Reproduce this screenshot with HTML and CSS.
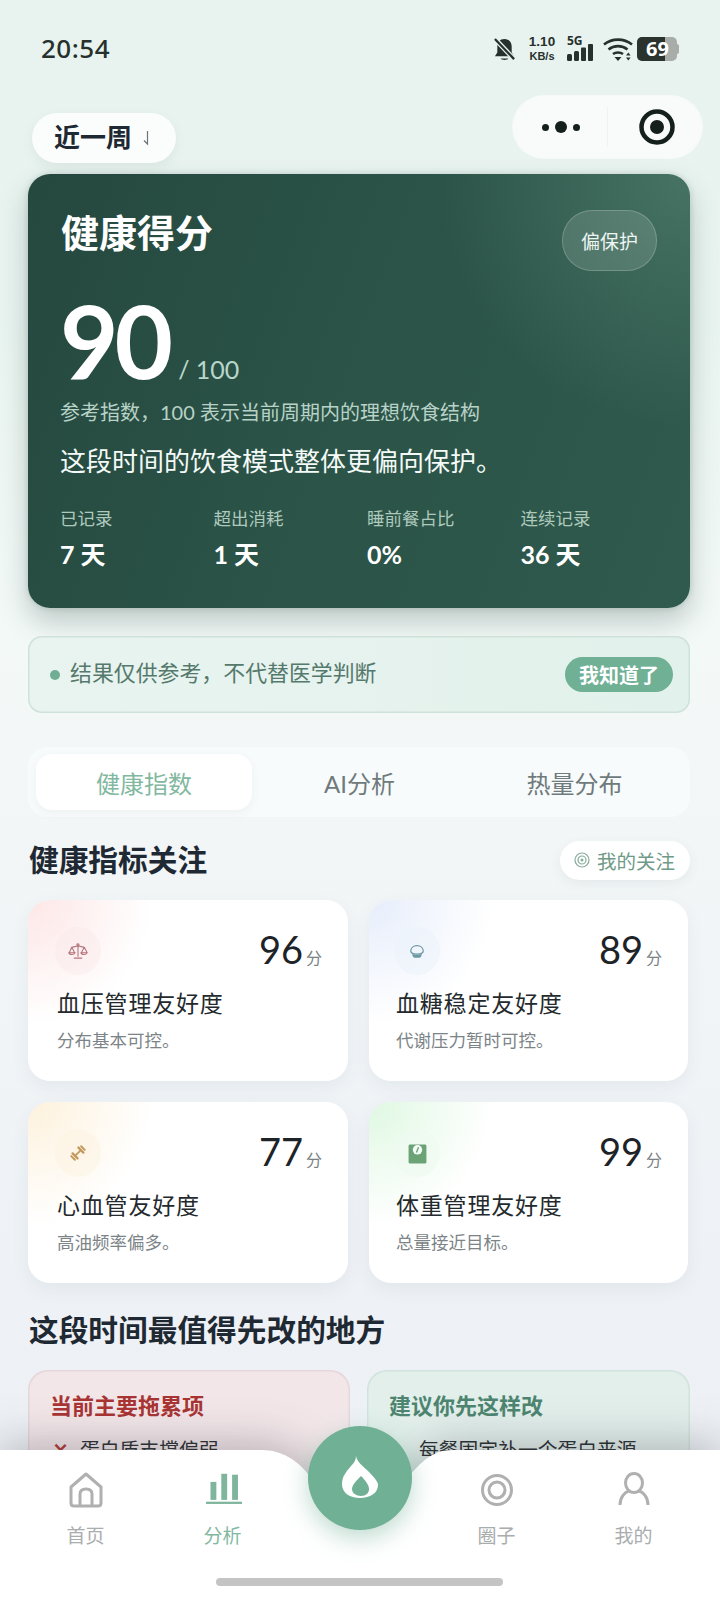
FILE: index.html
```html
<!DOCTYPE html>
<html lang="zh">
<head>
<meta charset="utf-8">
<title>健康得分</title>
<link rel="stylesheet" href="styles.css">
</head>
<body>
<div class="app">
  <header class="status">
    <span class="time">20:54</span>
    <div class="status-icons">
      <svg class="ic-bell" viewBox="0 0 24 26"><path d="M12 2c-5 0-7.500 3.500-7.500 8v6L2 20h20l-2.500-4v-6c0-4.500-2.500-8-7.500-8z" fill="#26302c"/><path d="M8 22.500c1 2 7 2 8 0z" fill="#26302c"/><path d="M2 2l20 21" stroke="#e9f3ef" stroke-width="5"/><path d="M2 2l20 21" stroke="#26302c" stroke-width="2.400"/></svg>
      <div class="speed"><span class="speed-num">1.10</span><span class="speed-unit">KB/s</span></div>
      <div class="net">
        <span class="net-label">5G</span>
        <svg class="ic-bars" viewBox="0 0 27 17"><rect x="0" y="10" width="5" height="7" rx="1.500"/><rect x="7" y="7" width="5" height="10" rx="1.500"/><rect x="14" y="3.500" width="5" height="13.500" rx="1"/><rect x="21" y="0" width="5" height="17" rx="1"/></svg>
      </div>
      <svg class="ic-wifi" viewBox="0 0 32 24"><path d="M2 7.500C10 1 22 1 30 7.500M6.500 12.500c5.500-4.500 13.500-4.500 19 0M11 17c2.800-2 7.200-2 10 0" fill="none" stroke="#26302c" stroke-width="2.600"/><path d="M12.500 20h7L16 24z" fill="#26302c"/><path d="M24 18.500h4.600l-2.300-3zM24 20.500h4.600l-2.300 3z" fill="#26302c"/></svg>
      <div class="battery"><span class="battery-fill"></span><span class="battery-num">69</span><span class="battery-nub"></span></div>
    </div>
  </header>

  <div class="topbar">
    <button class="period">近一周<svg class="ic-harpoon" viewBox="0 0 8 16"><path d="M5.500 1v13L2 10.500" fill="none" stroke="#6c7478" stroke-width="1.200"/></svg></button>
    <div class="capsule">
      <div class="capsule-dots"><i class="dot-s"></i><i class="dot-l"></i><i class="dot-s"></i></div>
      <span class="capsule-sep"></span>
      <svg class="ic-target" viewBox="0 0 38 38"><circle cx="19" cy="19" r="15.500" fill="none" stroke="#15201c" stroke-width="4.500"/><circle cx="19" cy="19" r="7" fill="#15201c"/></svg>
    </div>
  </div>

  <section class="hero">
    <div class="hero-head">
      <h1 class="hero-title">健康得分</h1>
      <span class="hero-badge">偏保护</span>
    </div>
    <div class="hero-score"><span class="hero-num">90</span><span class="hero-max">/ 100</span></div>
    <p class="hero-ref">参考指数，100 表示当前周期内的理想饮食结构</p>
    <p class="hero-desc">这段时间的饮食模式整体更偏向保护。</p>
    <div class="hero-stats">
      <div class="stat"><span class="stat-label">已记录</span><span class="stat-value">7 天</span></div>
      <div class="stat"><span class="stat-label">超出消耗</span><span class="stat-value">1 天</span></div>
      <div class="stat"><span class="stat-label">睡前餐占比</span><span class="stat-value">0%</span></div>
      <div class="stat"><span class="stat-label">连续记录</span><span class="stat-value">36 天</span></div>
    </div>
  </section>

  <div class="notice">
    <i class="notice-dot"></i>
    <span class="notice-text">结果仅供参考，不代替医学判断</span>
    <button class="notice-btn">我知道了</button>
  </div>

  <nav class="tabs">
    <span class="tab tab-active">健康指数</span>
    <span class="tab">AI分析</span>
    <span class="tab">热量分布</span>
  </nav>

  <div class="section-head">
    <h2 class="section-title">健康指标关注</h2>
    <button class="follow">
      <svg class="ic-follow" viewBox="0 0 16 16"><circle cx="8" cy="8" r="7" fill="none" stroke="#86ac9b" stroke-width="1.200"/><circle cx="8" cy="8" r="4" fill="none" stroke="#86ac9b" stroke-width="1.200"/><circle cx="8" cy="8" r="1.500" fill="#86ac9b"/></svg>
      我的关注
    </button>
  </div>

  <div class="metrics">
    <article class="metric metric-red">
      <div class="metric-top">
        <span class="metric-icon">
          <svg class="ic-scale" viewBox="0 0 24 20" fill="none" stroke="#b5757d" stroke-width="1.300"><path d="M12 2v15M7 18.500h10M4 5.500c3 0 5-1.500 8-1.500s5 1.500 8 1.500M4.500 5.500L1.500 12M4.500 5.500L8 12M19.500 5.500L16 12M19.500 5.500L23 12M1 12c.5 3 6.500 3 7.500 0zM15.500 12c.5 3 6.500 3 7.500 0z"/><circle cx="12" cy="2.500" r="1.300"/></svg>
        </span>
        <span class="metric-score"><b>96</b><em>分</em></span>
      </div>
      <h3 class="metric-title">血压管理友好度</h3>
      <p class="metric-sub">分布基本可控。</p>
    </article>
    <article class="metric metric-blue">
      <div class="metric-top">
        <span class="metric-icon">
          <svg class="ic-bowl" viewBox="0 0 18 16"><path d="M2 7.500C2 3.800 5 1.500 9 1.500s7 2.300 7 6c0 2-2 3.500-7 3.500S2 9.500 2 7.500z" fill="none" stroke="#6d99a3" stroke-width="1.400"/><path d="M3.500 10.500c2 1.500 9 1.500 11 0-.3 3-1.500 4.500-3 4.500H6.500c-1.500 0-2.700-1.500-3-4.500z" fill="#6d99a3"/></svg>
        </span>
        <span class="metric-score"><b>89</b><em>分</em></span>
      </div>
      <h3 class="metric-title">血糖稳定友好度</h3>
      <p class="metric-sub">代谢压力暂时可控。</p>
    </article>
    <article class="metric metric-orange">
      <div class="metric-top">
        <span class="metric-icon">
          <svg class="ic-dumbbell" viewBox="0 0 20 20" fill="none" stroke="#c39a5c" stroke-linecap="round"><path d="M7 13l6-6" stroke-width="2"/><path d="M4 10.500l5.500 5.500M10.500 4l5.500 5.500" stroke-width="2.600"/><path d="M2.500 13.500l4 4M13.500 2.500l4 4" stroke-width="2.200"/></svg>
        </span>
        <span class="metric-score"><b>77</b><em>分</em></span>
      </div>
      <h3 class="metric-title">心血管友好度</h3>
      <p class="metric-sub">高油频率偏多。</p>
    </article>
    <article class="metric metric-green">
      <div class="metric-top">
        <span class="metric-icon">
          <svg class="ic-weigh" viewBox="0 0 20 20"><path d="M3 1.500h14c1 0 1.500.5 1.500 1.500v15c0 .800-.5 1.500-1.500 1.500H3c-1 0-1.500-.7-1.500-1.500V3c0-1 .5-1.500 1.500-1.500z" fill="#6ba376"/><circle cx="10" cy="6.500" r="4.500" fill="#f4faf5"/><path d="M9 9l2-5" stroke="#6ba376" stroke-width="1.300"/></svg>
        </span>
        <span class="metric-score"><b>99</b><em>分</em></span>
      </div>
      <h3 class="metric-title">体重管理友好度</h3>
      <p class="metric-sub">总量接近目标。</p>
    </article>
  </div>

  <h2 class="section-title section-title-2">这段时间最值得先改的地方</h2>

  <div class="panels">
    <section class="panel panel-bad">
      <h3 class="panel-title">当前主要拖累项</h3>
      <p class="panel-item"><span class="panel-mark">×</span>蛋白质支撑偏弱</p>
    </section>
    <section class="panel panel-good">
      <h3 class="panel-title">建议你先这样改</h3>
      <p class="panel-item"><span class="panel-mark"></span>每餐固定补一个蛋白来源</p>
    </section>
  </div>

  <footer class="nav">
    <svg class="nav-bg" viewBox="0 0 720 150" preserveAspectRatio="none"><path d="M0 0H262C282 0 298 11 308 24L360 70 411 24C422 11 434 0 452 0H720V150H0z" fill="#fff"/></svg>
    <button class="fab" aria-label="记录">
      <svg viewBox="0 0 36 42"><path d="M14 0C15 6 20 9 27 16 33 22 36 26 36 29 36 37 28 42 18 42 8 42 0 37 0 28 0 20 5 15 9 10 12 7 14 4 14 0z" fill="#fff"/><path d="M19 20C15 24 10 29 10 33 10 37 14 40 19 40 24 40 27 37 27 33 27 29 23 24 19 20z" fill="#70b095"/></svg>
    </button>
    <div class="nav-items">
      <div class="nav-item">
        <svg class="nav-icon" viewBox="0 0 36 36" fill="none" stroke="#b0b0b0" stroke-width="3"><path d="M3 15L18 2l15 13v16c0 2-1 3-3 3H6c-2 0-3-1-3-3z" stroke-linejoin="round"/><path d="M12 34V22c0-3 2-5 6-5s6 2 6 5v12"/></svg>
        <span>首页</span>
      </div>
      <div class="nav-item nav-active">
        <svg class="nav-icon nav-icon-bars" viewBox="0 0 40 36"><g fill="#7fb59d"><rect x="5" y="9" width="6.500" height="20"/><rect x="17" y="0" width="6.500" height="29"/><rect x="29" y="1" width="6.500" height="28"/><rect x="0" y="31" width="40" height="2.500"/></g></svg>
        <span>分析</span>
      </div>
      <div class="nav-spacer"></div>
      <div class="nav-item">
        <svg class="nav-icon" viewBox="0 0 36 36" fill="none" stroke="#b0b0b0" stroke-width="3"><circle cx="18" cy="18" r="14.500"/><circle cx="18" cy="18" r="8"/></svg>
        <span>圈子</span>
      </div>
      <div class="nav-item">
        <svg class="nav-icon" viewBox="0 0 36 36" fill="none" stroke="#b0b0b0" stroke-width="3"><ellipse cx="18" cy="11" rx="8.500" ry="9.500"/><path d="M4 33c0-8 5-13 9-14M32 33c0-8-5-13-9-14"/></svg>
        <span>我的</span>
      </div>
    </div>
    <div class="home-bar"></div>
  </footer>
</div>
</body>
</html>
```
FILE: styles.css
```css
* { box-sizing: border-box; margin: 0; padding: 0; }
html, body { width: 720px; height: 1600px; overflow: hidden; }
body {
  font-family: Lato, "Noto Sans CJK SC", sans-serif;
  color: #1f2933;
}
button { font: inherit; border: none; background: none; }
.app {
  position: relative;
  width: 720px;
  height: 1600px;
  overflow: hidden;
  padding: 0 30px 0 28px;
  background: linear-gradient(180deg, #e8f3ef 0%, #e9f4f0 20%, #f3f9f7 40%, #f2f6f7 52%, #eef2f6 80%, #eceff4 100%);
}

/* status bar */
.status { height: 96px; display: flex; justify-content: space-between; margin-right: 13px; padding: 33px 0 0 13px; align-items: flex-start; }
.time { font-family: "Noto Sans", sans-serif; font-size: 26px; line-height: 30px; font-weight: 500; color: #26302c; letter-spacing: 0.5px; }
.status-icons { display: flex; align-items: flex-start; padding-top: 4px; }
.ic-bell { width: 23px; height: 25px; margin-right: 11px; }
.speed { display: flex; flex-direction: column; width: 30px; margin: -2px 10px 0 0; font-family: "Liberation Sans", sans-serif; color: #26302c; font-weight: 700; text-align: center; }
.speed-num { font-size: 13.500px; line-height: 14px; }
.speed-unit { margin-top: 1px; font-size: 11px; line-height: 12px; }
.net { position: relative; width: 27px; height: 24px; margin-right: 8px; }
.net-label { position: absolute; left: 0; top: -2px; font-family: "Noto Sans", sans-serif; font-size: 12px; line-height: 12px; font-weight: 700; color: #26302c; }
.ic-bars { position: absolute; left: 0; top: 7px; width: 27px; height: 17px; fill: #26302c; }
.ic-wifi { width: 32px; height: 24px; margin-right: 3px; }
.battery { position: relative; width: 40px; height: 24px; border-radius: 5px; background: #a9adaa; }
.battery-fill { position: absolute; left: 0; top: 0; width: 28px; height: 24px; border-radius: 5px 0 0 5px; background: #2b332f; }
.battery-num { position: relative; display: block; padding-left: 9px; font-family: "Noto Sans", sans-serif; font-size: 20px; line-height: 24px; font-weight: 700; color: #fff; }
.battery-nub { position: absolute; left: 40px; top: 7px; width: 2px; height: 10px; border-radius: 0 2px 2px 0; background: #a9adaa; }

/* top bar */
.topbar { display: flex; justify-content: space-between; align-items: flex-start; height: 78px; margin-right: -12px; }
.period {
  display: flex; align-items: center;
  width: 144px; height: 50px; margin: 17px 0 0 4px; padding: 0 0 5px 22px;
  border-radius: 25px; background: #fbfdfc;
  box-shadow: 0 4px 12px rgba(60, 90, 80, .08);
  font-size: 26px; font-weight: 700; color: #1f2933;
}
.ic-harpoon { width: 8px; height: 16px; margin: 4px 0 0 10px; }
.capsule {
  display: flex; align-items: center;
  width: 189px; height: 62px;
  border-radius: 31px; background: #f8fbfa;
  box-shadow: 0 0 0 1px rgba(255, 255, 255, .5);
}
.capsule-dots { display: flex; align-items: center; justify-content: center; width: 94px; gap: 6px; padding-left: 2px; }
.dot-s { width: 7px; height: 7px; border-radius: 50%; background: #15201c; }
.dot-l { width: 12px; height: 12px; border-radius: 50%; background: #15201c; }
.capsule-sep { width: 1px; height: 40px; background: #eef2f0; }
.ic-target { width: 38px; height: 38px; margin-left: 30px; }

/* hero */
.hero {
  width: 662px; height: 434px;
  padding: 35px 33px 0 32px;
  border-radius: 22px;
  color: #fff;
  background:
    radial-gradient(circle at 100% 0, rgba(110, 160, 140, .38) 0, rgba(110, 160, 140, 0) 32%),
    linear-gradient(110deg, #25483f 0%, #2b5347 45%, #2f5a4d 100%);
  box-shadow: 0 14px 28px rgba(40, 70, 60, .26), 0 0 6px rgba(40, 70, 60, .18);
}
.hero-head { display: flex; justify-content: space-between; align-items: flex-start; }
.hero-title { margin-left: 1px; font-size: 38px; line-height: 46px; font-weight: 700; }
.hero-badge {
  display: flex; align-items: center; justify-content: center;
  width: 95px; height: 61px; margin: 1px 0 0;
  border-radius: 30px;
  background: rgba(255, 255, 255, .13);
  box-shadow: inset 0 0 0 1px rgba(255, 255, 255, .2);
  font-size: 19px; color: #eef6f2;
}
.hero-score { display: flex; align-items: baseline; height: 107px; margin-top: 16px; }
.hero-num { font-size: 101px; line-height: 110px; font-weight: 700; letter-spacing: -4px; margin: -2px 0 0 0; }
.hero-max { margin-left: 9px; font-size: 25px; color: #b8d6ca; font-weight: 400; }
.hero-ref { margin-top: 5px; font-size: 20px; line-height: 26px; color: #b8d2c7; }
.hero-desc { margin-top: 18px; font-size: 26px; line-height: 36px; color: #f4faf7; }
.hero-stats { display: grid; grid-template-columns: repeat(4, 153.500px); margin-top: 28px; }
.stat { display: flex; flex-direction: column; }
.stat-label { font-size: 17.500px; line-height: 24px; color: #aecabd; }
.stat-value { margin-top: 5px; font-size: 25px; line-height: 36px; font-weight: 700; color: #fff; }

/* notice */
.notice {
  display: flex; align-items: center;
  width: 662px; height: 77px; margin-top: 28px; padding: 0 17px 0 22px;
  border-radius: 14px;
  background: linear-gradient(90deg, #e9f4f0, #e2f1eb);
  box-shadow: inset 0 0 0 1.500px #cfe2da;
}
.notice-dot { width: 10px; height: 10px; border-radius: 50%; background: #6fae95; margin-right: 10px; }
.notice-text { flex: 1; padding-bottom: 6px; font-size: 21.900px; color: #55796c; }
.notice-btn {
  width: 108px; height: 35px;
  border-radius: 18px; background: #70b095;
  color: #fff; font-size: 20px; font-weight: 700;
}

/* tabs */
.tabs {
  display: grid; grid-template-columns: 216px 1fr 1fr; align-items: stretch;
  width: 662px; height: 70px; margin-top: 34px; padding: 7px 8px;
  border-radius: 20px; background: #f8fbfb;
}
.tab { display: flex; align-items: center; justify-content: center; font-size: 24px; color: #6f7a7c; }
.tab-active { border-radius: 16px; background: #fff; color: #82b8a0; box-shadow: 0 3px 10px rgba(60, 90, 80, .06); }

/* section headers */
.section-head { display: flex; justify-content: space-between; align-items: center; width: 662px; height: 40px; margin-top: 23px; }
.section-title { padding-left: 1px; font-size: 29.700px; line-height: 40px; font-weight: 700; color: #1f2933; }
.section-title-2 { margin-top: 27px; }
.follow {
  display: flex; align-items: center; gap: 7px;
  width: 130px; height: 39px; padding-left: 14px;
  border-radius: 20px; background: #fff;
  box-shadow: 0 4px 12px rgba(60, 90, 80, .07);
  font-size: 19.500px; color: #6f9a88;
}
.ic-follow { width: 16px; height: 16px; flex: none; }

/* metric cards */
.metrics { display: grid; grid-template-columns: 320px 319px; column-gap: 21px; row-gap: 21px; margin-top: 20px; }
.metric {
  height: 181px; padding: 27px 26px 0 29px;
  border-radius: 22px;
  box-shadow: 0 6px 18px rgba(70, 90, 110, .07);
}
.metric-blue, .metric-green { padding-left: 27px; }
.metric-red { background: radial-gradient(circle at 0 0, #fde6e6 0, #fff 125px); }
.metric-blue { background: radial-gradient(circle at 0 0, #e6edfb 0, #fff 125px); }
.metric-orange { background: radial-gradient(circle at 0 0, #fdf1dc 0, #fff 125px); }
.metric-green { background: radial-gradient(circle at 0 0, #dff8e2 0, #fff 125px); }
.metric-top { display: flex; justify-content: space-between; align-items: flex-start; height: 53px; }
.metric-icon {
  display: flex; align-items: center; justify-content: center;
  width: 46px; height: 48px; margin: 0 0 0 -2px;
  border-radius: 50%;
}
.metric-red .metric-icon { background: rgba(250, 232, 232, .45); }
.metric-blue .metric-icon { background: rgba(236, 243, 251, .6); }
.metric-orange .metric-icon { background: rgba(252, 243, 226, .6); }
.metric-green .metric-icon { background: rgba(238, 250, 240, .6); }
.ic-scale { width: 20px; height: 18px; }
.ic-bowl { width: 16px; height: 15px; }
.ic-dumbbell { width: 18px; height: 18px; }
.ic-weigh { width: 21px; height: 21px; }
.metric-score { display: flex; align-items: baseline; line-height: 44px; }
.metric-score b { font-size: 38px; font-weight: 400; color: #1d2327; }
.metric-score em { margin-left: 3px; font-size: 16px; font-style: normal; color: #7b8285; }
.metric-title { margin-top: 6px; font-size: 23px; line-height: 34px; font-weight: 400; letter-spacing: .8px; color: #23292c; }
.metric-sub { margin-top: 9px; font-size: 17.500px; line-height: 24px; color: #7c8488; }

/* panels */
.panels { display: grid; grid-template-columns: 322px 323px; column-gap: 17px; margin-top: 20px; }
.panel { height: 260px; padding: 21px 22px 0; border-radius: 20px; }
.panel-bad { background: #f2e6e9; box-shadow: inset 0 0 0 1.500px #e6d6da; }
.panel-good { background: #e2efeb; box-shadow: inset 0 0 0 1.500px #d2e2dc; }
.panel-title { font-size: 22px; line-height: 30px; font-weight: 700; }
.panel-bad .panel-title { color: #a93434; }
.panel-good .panel-title { color: #4d8570; }
.panel-item { display: flex; align-items: center; margin-top: 13px; font-size: 19.800px; line-height: 30px; color: #2a3033; }
.panel-mark { width: 30px; flex: none; padding-left: 3px; font-size: 26px; font-weight: 700; color: #b23a3a; }

/* bottom nav */
.nav { position: absolute; left: 0; right: 0; bottom: 0; height: 150px; padding-top: 22px; }
.nav-bg { position: absolute; inset: 0; width: 720px; height: 150px; filter: drop-shadow(0 -6px 22px rgba(50, 50, 60, .3)); }
.fab {
  position: absolute; left: 308px; top: -24px;
  display: flex; align-items: center; justify-content: center;
  width: 104px; height: 104px;
  border-radius: 50%; background: #70b095;
  box-shadow: 0 8px 24px rgba(111, 174, 149, .45);
}
.fab svg { width: 36px; height: 42px; margin-top: -2px; }
.nav-items { position: relative; display: grid; grid-template-columns: repeat(5, 137px); padding-left: 17px; }
.nav-item { display: flex; flex-direction: column; align-items: center; font-size: 19px; line-height: 24px; color: #a9adae; }
.nav-icon { width: 36px; height: 36px; margin-bottom: 16px; }
.nav-icon-bars { margin-left: 3px; }
.nav-active { color: #82b8a0; }
.home-bar { position: absolute; left: 216px; bottom: 14px; width: 287px; height: 8px; border-radius: 4px; background: #c4c4c4; }
```
